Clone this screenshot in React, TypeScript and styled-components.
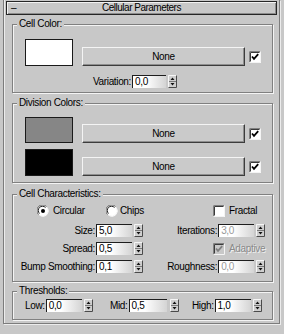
import React from 'react';
import styled, { createGlobalStyle } from 'styled-components';

const Global = createGlobalStyle`
  html, body { margin: 0; padding: 0; background: #c8c8c8; }
  body {
    font-family: "Liberation Sans", Arial, sans-serif;
    font-size: 10px;
    letter-spacing: -0.35px;
    color: #000;
  }
`;

const Page = styled.div`
  width: 284px;
  height: 334px;
  overflow: hidden;
  background: #c8c8c8;
`;

const Rollout = styled.div`
  margin-left: 3px;
  width: 277px;
  height: 324px;
  box-sizing: border-box;
  border-left: 1px solid #7c7c7c;
  border-right: 1px solid #7c7c7c;
  border-bottom: 1px solid #7c7c7c;
  box-shadow: inset 1px 0 0 #ececec, 1px 1px 0 #ececec;
  padding: 1px 2px 0 2px;
`;

const TitleBar = styled.div`
  height: 14px;
  box-sizing: border-box;
  border: 1px solid #262626;
  box-shadow: inset 1px 1px 0 #f2f2f2, inset -1px -1px 0 #8c8c8c;
  display: grid;
  grid-template-columns: 1fr auto 1fr;
  align-items: center;
  line-height: 12px;
  letter-spacing: -0.5px;
`;

const Collapse = styled.span`
  padding-left: 4px;
`;

const Body = styled.div`
  padding: 0 4px 0 6px;
`;

const Group = styled.fieldset<{ $mt: number; $pt: number; $pb: number; $pl: number; $pr: number }>`
  margin: ${p => p.$mt}px 0 0 0;
  padding: ${p => p.$pt}px ${p => p.$pr}px ${p => p.$pb}px ${p => p.$pl}px;
  border: 1px solid #808080;
  box-shadow: inset 1px 1px 0 #f4f4f4, 1px 1px 0 #f4f4f4;
  min-width: 0;
  & > legend {
    margin-left: ${p => 4 - p.$pl}px;
  }
`;

const Legend = styled.legend`
  padding: 0 2px;
  line-height: 12px;
  height: 12px;
  background: #c8c8c8;
`;

const SwatchRow = styled.div<{ $mt?: number }>`
  display: flex;
  align-items: flex-end;
  margin-top: ${p => p.$mt ?? 0}px;
`;

const Swatch = styled.div<{ $color: string; $h: number }>`
  width: 48px;
  height: ${p => p.$h}px;
  box-sizing: border-box;
  background: ${p => p.$color};
  border: 1px solid #1a1a1a;
  flex: none;
`;

const ButtonLine = styled.div`
  flex: 1;
  display: flex;
  align-items: center;
  margin-left: 9px;
`;

const MapButton = styled.div`
  flex: 1;
  height: 19px;
  box-sizing: border-box;
  border-top: 1px solid #f4f4f4;
  border-left: 1px solid #f4f4f4;
  border-right: 1px solid #3c3c3c;
  border-bottom: 1px solid #3c3c3c;
  box-shadow: inset -1px -1px 0 #8e8e8e;
  background: #cacaca;
  display: flex;
  align-items: center;
  justify-content: center;
  line-height: 12px;
`;

const CheckWrap = styled.span<{ $ml?: number }>`
  display: inline-flex;
  margin-left: ${p => p.$ml ?? 0}px;
  flex: none;
`;

const SpinRow = styled.div<{ $pl: number; $mt: number }>`
  display: flex;
  padding-left: ${p => p.$pl}px;
  margin-top: ${p => p.$mt}px;
`;

const SpinnerBox = styled.div<{ $justify?: string }>`
  display: flex;
  align-items: center;
  height: 13px;
  justify-self: ${p => p.$justify ?? 'end'};
`;

const SpinLabel = styled.span`
  margin-right: 1px;
  white-space: nowrap;
  line-height: 13px;
`;

const Field = styled.div<{ $w: number; $disabled?: boolean }>`
  width: ${p => p.$w}px;
  height: 13px;
  box-sizing: border-box;
  border-top: 1px solid #1e1e1e;
  border-left: 1px solid #1e1e1e;
  background: linear-gradient(90deg, #ffffff 0%, #ffffff 40%, #d4d4d4 100%);
  padding-left: 2px;
  line-height: 12px;
  color: ${p => (p.$disabled ? '#9a9a9a' : '#000')};
`;

const ArrowsWrap = styled.span<{ $gap: number }>`
  display: inline-flex;
  margin-left: ${p => p.$gap}px;
`;

const CharGrid = styled.div`
  display: grid;
  grid-template-columns: 120px 1fr;
  row-gap: 5px;
  margin-top: 7px;
`;

const RadioRow = styled.div`
  display: grid;
  grid-template-columns: 69px 107px auto;
  padding-left: 14px;
  height: 12px;
  align-items: center;
`;

const Option = styled.label<{ $disabled?: boolean; $gap?: number }>`
  display: flex;
  align-items: center;
  gap: ${p => p.$gap ?? 4}px;
  line-height: 12px;
  white-space: nowrap;
  color: ${p => (p.$disabled ? '#8a8a8a' : '#000')};
  text-shadow: ${p => (p.$disabled ? '1px 1px 0 #f0f0f0' : 'none')};
`;

const AdaptiveCell = styled.div`
  justify-self: start;
  margin-left: 70px;
  display: flex;
  align-items: center;
  height: 13px;
`;

const ThreshRow = styled.div`
  display: grid;
  grid-template-columns: 85px 82px auto;
`;

const Arrows: React.FC = () => (
  <svg width="9" height="13" viewBox="0 0 9 13">
    <rect x="0" y="0" width="9" height="13" fill="#cfcfcf" />
    <path d="M0.5 12.5V0.5H8.5" stroke="#f6f6f6" fill="none" />
    <path d="M0.5 12.5H8.5V0.5" stroke="#4a4a4a" fill="none" />
    <line x1="1" y1="6.5" x2="8" y2="6.5" stroke="#7a7a7a" />
    <polygon points="2.5,5 4.5,2.5 6.5,5" fill="#111" />
    <polygon points="2.5,8 4.5,10.5 6.5,8" fill="#111" />
  </svg>
);

const CheckBox: React.FC<{ checked?: boolean; disabled?: boolean }> = ({ checked, disabled }) => (
  <svg width="12" height="12" viewBox="0 0 12 12">
    <rect x="0" y="0" width="12" height="12" fill={disabled ? '#c8c8c8' : '#ffffff'} />
    <path d="M0.5 11.5V0.5H11.5" stroke="#808080" fill="none" />
    <path d="M1.5 10.5V1.5H10.5" stroke="#3a3a3a" fill="none" />
    <path d="M11.5 0.5V11.5H0.5" stroke="#f4f4f4" fill="none" />
    {checked && (
      <path d="M3 5.5L5 7.8L9.2 3.2" stroke={disabled ? '#808080' : '#000'} strokeWidth="1.8" fill="none" />
    )}
  </svg>
);

const Radio: React.FC<{ checked?: boolean }> = ({ checked }) => (
  <svg width="12" height="12" viewBox="0 0 12 12">
    <circle cx="6" cy="6" r="5.5" fill="#ffffff" />
    <path d="M1.5 9.5A5.5 5.5 0 0 1 9.5 1.5" stroke="#6a6a6a" fill="none" />
    <path d="M2.5 8.5A4.2 4.2 0 0 1 8.5 2.5" stroke="#1e1e1e" fill="none" />
    <path d="M10.3 2.7A5.5 5.5 0 0 1 2.7 10.3" stroke="#f4f4f4" fill="none" />
    {checked && <circle cx="6" cy="6" r="2" fill="#000" />}
  </svg>
);

type SpinnerProps = {
  label: string;
  value: string;
  w?: number;
  gap?: number;
  disabled?: boolean;
  justify?: string;
};

const Spinner: React.FC<SpinnerProps> = ({ label, value, w = 36, gap = 2, disabled, justify }) => (
  <SpinnerBox $justify={justify}>
    <SpinLabel>{label}</SpinLabel>
    <Field $w={w} $disabled={disabled}>{value}</Field>
    <ArrowsWrap $gap={gap}>
      <Arrows />
    </ArrowsWrap>
  </SpinnerBox>
);

const MapSlot: React.FC<{ color: string; h: number; mt?: number }> = ({ color, h, mt }) => (
  <SwatchRow $mt={mt}>
    <Swatch $color={color} $h={h} />
    <ButtonLine>
      <MapButton>None</MapButton>
      <CheckWrap $ml={4}>
        <CheckBox checked />
      </CheckWrap>
    </ButtonLine>
  </SwatchRow>
);

export default function App() {
  return (
    <Page>
      <Global />
      <Rollout>
        <TitleBar>
          <Collapse>–</Collapse>
          <span>Cellular Parameters</span>
          <span />
        </TitleBar>
        <Body>
          <Group $mt={3} $pt={9} $pb={4} $pl={12} $pr={11}>
            <Legend>Cell Color:</Legend>
            <MapSlot color="#ffffff" h={27} />
            <SpinRow $pl={68} $mt={9}>
              <Spinner label="Variation:" value="0,0" w={34} />
            </SpinRow>
          </Group>

          <Group $mt={4} $pt={8} $pb={6} $pl={12} $pr={11}>
            <Legend>Division Colors:</Legend>
            <MapSlot color="#868686" h={26} />
            <MapSlot color="#000000" h={27} mt={6} />
          </Group>

          <Group $mt={5} $pt={5} $pb={8} $pl={10} $pr={11}>
            <Legend>Cell Characteristics:</Legend>
            <RadioRow>
              <Option>
                <Radio checked />
                Circular
              </Option>
              <Option $gap={2}>
                <Radio />
                Chips
              </Option>
              <Option>
                <CheckBox />
                Fractal
              </Option>
            </RadioRow>
            <CharGrid>
              <Spinner label="Size:" value="5,0" />
              <Spinner label="Iterations:" value="3,0" disabled />
              <Spinner label="Spread:" value="0,5" />
              <AdaptiveCell>
                <Option $disabled>
                  <CheckBox checked disabled />
                  Adaptive
                </Option>
              </AdaptiveCell>
              <Spinner label="Bump Smoothing:" value="0,1" />
              <Spinner label="Roughness:" value="0,0" disabled />
            </CharGrid>
          </Group>

          <Group $mt={3} $pt={2} $pb={7} $pl={12} $pr={11}>
            <Legend>Thresholds:</Legend>
            <ThreshRow>
              <Spinner label="Low:" value="0,0" justify="start" />
              <Spinner label="Mid:" value="0,5" w={38} gap={3} justify="start" />
              <Spinner label="High:" value="1,0" w={36} justify="start" />
            </ThreshRow>
          </Group>
        </Body>
      </Rollout>
    </Page>
  );
}
